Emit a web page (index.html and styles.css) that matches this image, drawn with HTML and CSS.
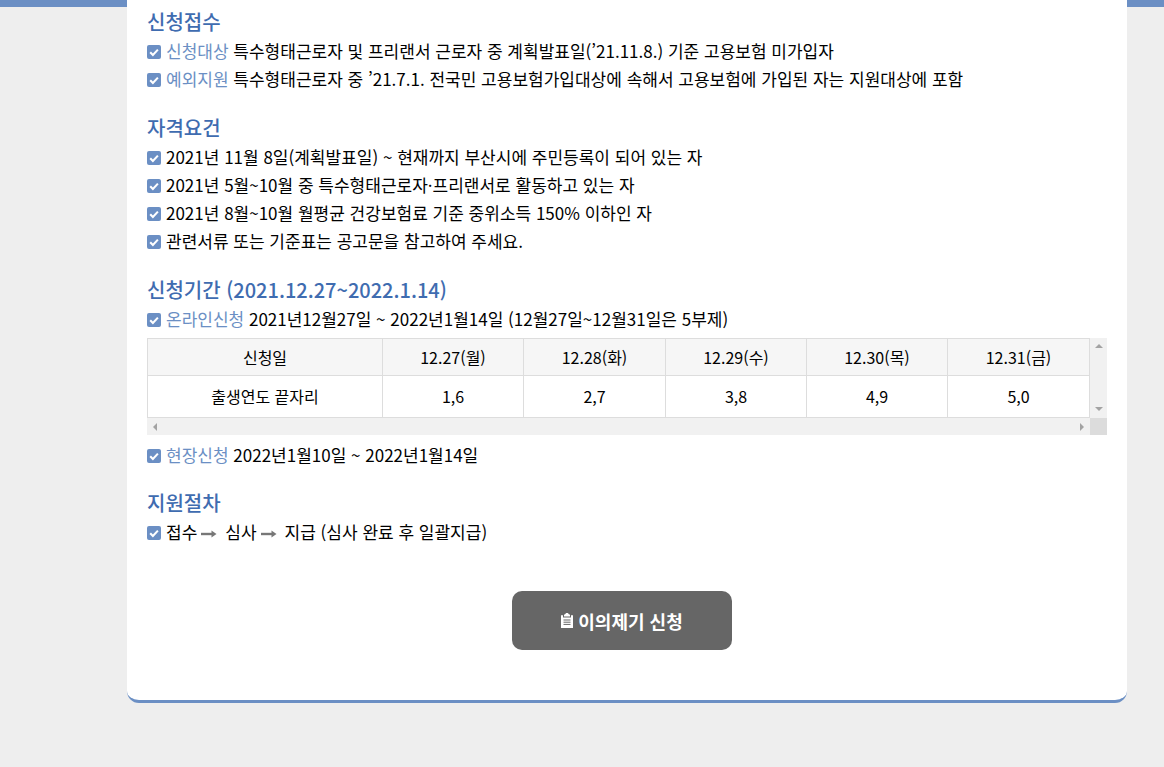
FILE: index.html
```html
<!DOCTYPE html>
<html lang="ko">
<head>
<meta charset="utf-8">
<title>이의제기 신청</title>
<link rel="stylesheet" href="styles.css">
</head>
<body>
<svg class="defs" width="0" height="0" aria-hidden="true">
  <symbol id="chk" viewBox="0 0 14 14">
    <rect width="14" height="14" rx="2" fill="#6b8fc4"/>
    <path d="M3.2 7.2 5.9 9.9 10.9 4.6" fill="none" stroke="#fff" stroke-width="2.1"/>
  </symbol>
  <symbol id="arr" viewBox="0 0 16 10">
    <path d="M0 5H12" stroke="#777" stroke-width="2.4" fill="none"/>
    <path d="M10.5 1.5 15.5 5 10.5 8.5Z" fill="#777"/>
  </symbol>
</svg>
<main class="card">
  <section class="sec first">
    <h2 class="tit">신청접수</h2>
    <p class="it"><svg class="ck"><use href="#chk"/></svg><span class="lb">신청대상</span> 특수형태근로자 및 프리랜서 근로자 중 계획발표일(’21.11.8.) 기준 고용보험 미가입자</p>
    <p class="it"><svg class="ck"><use href="#chk"/></svg><span class="lb">예외지원</span> 특수형태근로자 중 ’21.7.1. 전국민 고용보험가입대상에 속해서 고용보험에 가입된 자는 지원대상에 포함</p>
  </section>
  <section class="sec">
    <h2 class="tit">자격요건</h2>
    <p class="it"><svg class="ck"><use href="#chk"/></svg>2021년 11월 8일(계획발표일) ~ 현재까지 부산시에 주민등록이 되어 있는 자</p>
    <p class="it"><svg class="ck"><use href="#chk"/></svg>2021년 5월~10월 중 특수형태근로자·프리랜서로 활동하고 있는 자</p>
    <p class="it"><svg class="ck"><use href="#chk"/></svg>2021년 8월~10월 월평균 건강보험료 기준 중위소득 150% 이하인 자</p>
    <p class="it"><svg class="ck"><use href="#chk"/></svg>관련서류 또는 기준표는 공고문을 참고하여 주세요.</p>
  </section>
  <section class="sec">
    <h2 class="tit">신청기간 (2021.12.27~2022.1.14)</h2>
    <p class="it"><svg class="ck"><use href="#chk"/></svg><span class="lb">온라인신청</span> 2021년12월27일 ~ 2022년1월14일 (12월27일~12월31일은 5부제)</p>
    <div class="scroll">
      <table class="tb">
        <tr class="hd"><th>신청일</th><th>12.27(월)</th><th>12.28(화)</th><th>12.29(수)</th><th>12.30(목)</th><th>12.31(금)</th></tr>
        <tr class="bd"><td>출생연도 끝자리</td><td>1,6</td><td>2,7</td><td>3,8</td><td>4,9</td><td>5,0</td></tr>
      </table>
      <div class="sb-v"><i class="up"></i><i class="down"></i></div>
      <div class="sb-h"><i class="left"></i><i class="right"></i></div>
      <div class="corner"></div>
    </div>
    <p class="it after"><svg class="ck"><use href="#chk"/></svg><span class="lb">현장신청</span> 2022년1월10일 ~ 2022년1월14일</p>
  </section>
  <section class="sec last">
    <h2 class="tit">지원절차</h2>
    <p class="it"><svg class="ck"><use href="#chk"/></svg>접수<svg class="ar"><use href="#arr"/></svg>심사<svg class="ar"><use href="#arr"/></svg>지급 (심사 완료 후 일괄지급)</p>
  </section>
  <div class="btns">
    <a class="btn">
      <svg class="clip" viewBox="0 0 12 15"><path fill="#fff" d="M4 1.6C4.2.6 5 0 6 0s1.8.6 2 1.6h1V3.6H3V1.6Z"/><path fill="#fff" d="M0 2.2h2V4.6h8V2.2h2V15H0Z"/><path d="M2.5 7h7M2.5 9.2h7M2.5 11.4h7" stroke="#666" stroke-width="1"/></svg>
      이의제기 신청
    </a>
  </div>
</main>
</body>
</html>
```
FILE: styles.css
```css
* { box-sizing: border-box; }
html, body { margin: 0; padding: 0; }
body {
  height: 767px;
  overflow: hidden;
  background: linear-gradient(#6b8fc4 0 7px, #eeeeee 7px);
  font-family: "Noto Sans CJK KR", "Noto Sans", sans-serif;
  font-size: 17px;
  color: #000;
}
.defs { position: absolute; }
.card {
  width: 1000px;
  height: 703px;
  margin-left: 127px;
  padding: 0 20px;
  background: #fff;
  border-bottom: 3px solid #6b8fc4;
  border-radius: 0 0 12px 12px;
}
.sec { padding-top: 22px; }
.sec.first { padding-top: 8px; }
.sec.last { padding-top: 21px; }
.tit {
  margin: 0;
  height: 28px;
  line-height: 28px;
  font-size: 20px;
  font-weight: 500;
  color: #3f6cb0;
}
.it {
  margin: 0;
  height: 28px;
  padding-top: 1px;
  line-height: 28px;
  white-space: nowrap;
  display: block;
}
.ck { width: 14px; height: 14px; margin-right: 5px; vertical-align: -1px; }
.lb { color: #6b8fc4; }
.ar { width: 16px; height: 10px; margin: 0 8px 0 4px; vertical-align: 0; }
.scroll {
  display: grid;
  grid-template-columns: 943px 17px;
  grid-template-rows: 80px 17px;
  margin-top: 6px;
  width: 960px;
}
.tb {
  width: 943px;
  height: 80px;
  border-collapse: collapse;
  table-layout: fixed;
  font-size: 16px;
}
.tb th, .tb td {
  border: 1px solid #ddd;
  text-align: center;
  font-weight: 400;
  padding: 0;
}
.hd th { background: #f6f6f6; height: 37px; }
.bd td { height: 42px; padding-bottom: 2px; }
.tb th:first-child { width: 235px; }
.tb th:nth-child(2) { width: 141px; }
.tb th:nth-child(3) { width: 142px; }
.tb th:nth-child(4), .tb th:nth-child(5) { width: 141px; }
.tb th:nth-child(6) { width: 142px; }
.sb-v { background: #f1f1f1; display: flex; flex-direction: column; justify-content: space-between; align-items: center; padding: 6px 0 7px; }
.sb-h { background: #f1f1f1; display: flex; justify-content: space-between; align-items: center; padding: 0 6px; }
.corner { background: #dcdcdc; }
.sb-v i, .sb-h i { display: block; width: 0; height: 0; border-style: solid; border-color: transparent; }
.up { border-width: 0 4px 4px; border-bottom-color: #a3a3a3 !important; }
.down { border-width: 4px 4px 0; border-top-color: #a3a3a3 !important; }
.left { border-width: 4px 4px 4px 0; border-right-color: #a3a3a3 !important; }
.right { border-width: 4px 0 4px 4px; border-left-color: #a3a3a3 !important; }
.after { margin-top: 5px; }
.btns { display: flex; justify-content: center; margin-top: 46px; padding-right: 10px; }
.btn {
  display: flex;
  align-items: center;
  justify-content: center;
  gap: 5px;
  width: 220px;
  height: 59px;
  background: #666;
  border-radius: 10px;
  color: #fff;
  font-size: 18px;
  font-weight: 700;
}
.clip { width: 12px; height: 15px; }
```
